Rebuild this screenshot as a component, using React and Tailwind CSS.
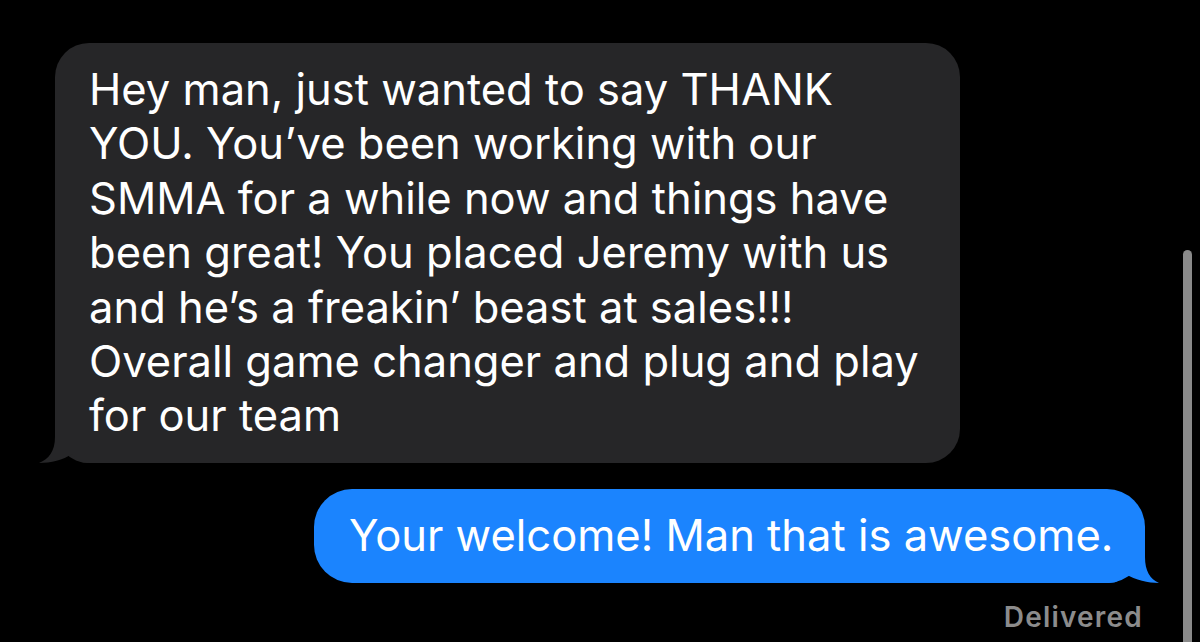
import React from "react";

const incoming = [
  "Hey man, just wanted to say THANK",
  "YOU. You\u2019ve been working with our",
  "SMMA for a while now and things have",
  "been great! You placed Jeremy with us",
  "and he\u2019s a freakin\u2019 beast at sales!!!",
  "Overall game changer and plug and play",
  "for our team",
];

export default function App() {
  return (
    <div className="relative w-[1200px] h-[642px] overflow-hidden bg-black font-['Inter',sans-serif] antialiased">
      <div className="flex flex-col">
        {/* received bubble */}
        <div className="relative ml-[55px] mt-[43px] w-[905px] rounded-[34px] bg-[#262628] px-[34px] pt-[19px] pb-[20px] text-[43.5px] leading-[54.4px] text-white">
          <svg className="absolute left-[-16px] bottom-0" width="70" height="50" viewBox="0 0 70 50">
            <path d="M16 0 L16 24 C16 38 10 46 0 50 C12 50 24 47 33 41 C38 47 42 50 50 50 L70 50 L70 0 Z" fill="#262628" />
          </svg>
          <div className="relative">
            {incoming.map((line) => (
              <div key={line}>{line}</div>
            ))}
          </div>
        </div>

        {/* sent bubble */}
        <div className="relative self-end mr-[55px] mt-[26px] w-[831px] h-[94px] rounded-[38px] bg-[#1b84fe] pl-[35px] flex items-center text-[43.5px] text-white">
          <svg className="absolute right-[-14px] bottom-0" width="70" height="50" viewBox="0 0 70 50">
            <path d="M56 0 L56 24 C56 38 61 46 70 50 C59 50 47 47 36 41 C32 47 28 50 20 50 L0 50 L0 0 Z" fill="#1b84fe" />
          </svg>
          <span className="relative">Your welcome! Man that is awesome.</span>
        </div>

        <div className="self-end mr-[57px] mt-[20px] text-[28px] leading-[28px] tracking-[1.2px] font-semibold text-[#8c8c8c]">Delivered</div>
      </div>

      {/* scroll indicator */}
      <div className="absolute left-[1183px] top-[250px] bottom-0 w-[9px] rounded-t-full bg-[#8a8a8a]" />
    </div>
  );
}
